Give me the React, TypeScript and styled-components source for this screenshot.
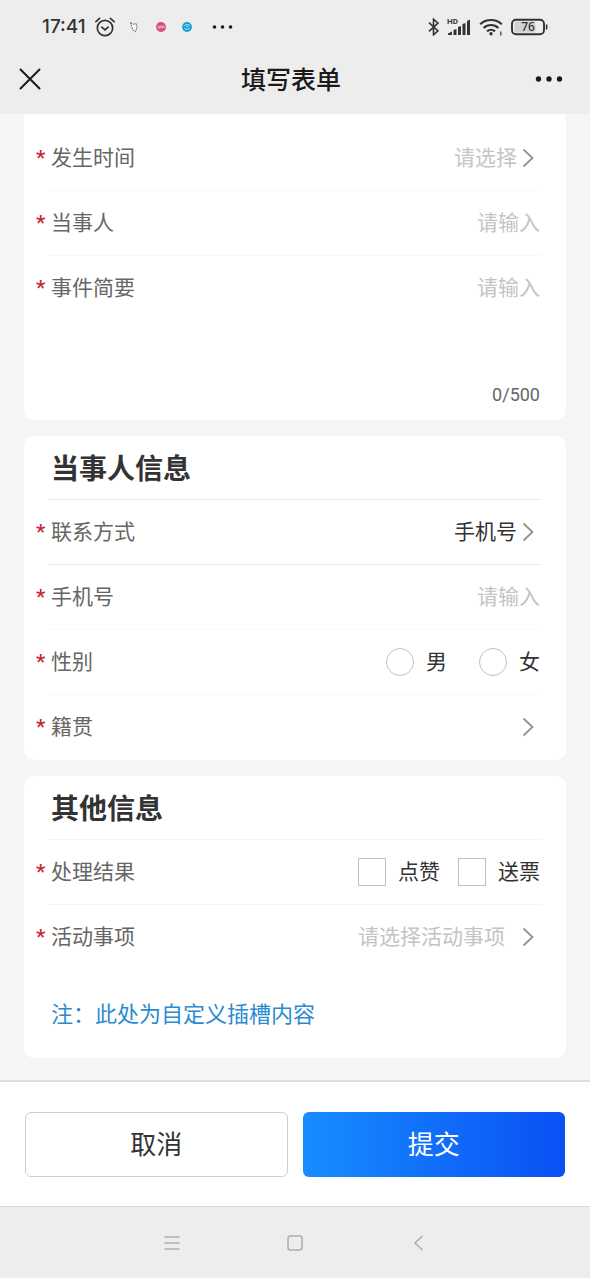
import React from "react";
import styled, { createGlobalStyle } from "styled-components";

const GlobalStyle = createGlobalStyle`
  *, *::before, *::after { box-sizing: border-box; }
  body {
    margin: 0;
    background: #f5f5f5;
    font-family: Roboto, "Noto Sans CJK SC", sans-serif;
    font-size: 21px;
    line-height: 30px;
    color: #333;
  }
  button, input, select, textarea {
    font: inherit;
    color: inherit;
    margin: 0;
    padding: 0;
    border: 0;
    background: none;
  }
`;

const Page = styled.div`
  min-height: 100vh;
  display: flex;
  flex-direction: column;
`;

const Header = styled.header`
  background: #ededed;
  padding-bottom: 9px;
`;

const StatusBar = styled.div`
  height: 53px;
  padding: 0 42px;
  display: flex;
  align-items: center;
  justify-content: space-between;
  color: #333;
`;

const StatusGroup = styled.div<{ $gap: number }>`
  display: flex;
  align-items: center;
  gap: ${(p) => p.$gap}px;
`;

const Clock = styled.time`
  font-family: Inter, sans-serif;
  font-size: 19px;
  font-weight: 500;
  line-height: 24px;
`;

const TitleBar = styled.div`
  height: 52px;
  padding: 0 27px 0 19px;
  display: grid;
  grid-template-columns: 1fr auto 1fr;
  align-items: center;
`;

const Title = styled.h1`
  margin: 0;
  padding-top: 4px;
  font-size: 25px;
  font-weight: 500;
  line-height: 36px;
  color: #1a1a1a;
`;

const IconButton = styled.button<{ $end?: boolean }>`
  display: flex;
  justify-self: ${(p) => (p.$end ? "end" : "start")};
  color: #1a1a1a;
`;

const Form = styled.form`
  flex: 1;
  display: flex;
  flex-direction: column;
`;

const Cards = styled.main`
  flex: 1;
  padding: 0 24px 22px;
  display: flex;
  flex-direction: column;
  gap: 16px;
`;

const Card = styled.section<{ $continued?: boolean }>`
  background: #fff;
  padding: ${(p) => (p.$continued ? "12px 24px 0" : "0 24px")};
  border-radius: ${(p) => (p.$continued ? "0 0 10px 10px" : "10px")};
`;

const CardTitle = styled.h2<{ $faint?: boolean }>`
  margin: 0;
  height: 64px;
  padding: 4px 3px 0;
  display: flex;
  align-items: center;
  font-size: 28px;
  font-weight: 700;
  line-height: 40px;
  border-bottom: 1px solid ${(p) => (p.$faint ? "#f4f4f4" : "#ececec")};
`;

const lineColors = {
  strong: "#ececec",
  medium: "#f4f4f4",
  faint: "#f9f9f9",
  none: "transparent",
};

const Row = styled.div<{ $line: keyof typeof lineColors }>`
  min-height: 65px;
  padding: 0 2px 0 3px;
  display: flex;
  align-items: center;
  border-bottom: 1px solid ${(p) => lineColors[p.$line]};
`;

const Required = styled.span`
  width: 15px;
  margin-left: -15px;
  font-weight: 500;
  color: #c4283c;
`;

const Label = styled.label`
  flex: none;
  color: #666;
`;

const TextInput = styled.input`
  flex: 1;
  min-width: 0;
  height: 30px;
  text-align: right;
  outline: none;
  &::placeholder { color: #c4c4c4; opacity: 1; }
`;

const Picker = styled.select<{ $empty?: boolean }>`
  flex: 1;
  min-width: 0;
  height: 30px;
  appearance: none;
  text-align-last: right;
  outline: none;
  color: ${(p) => (p.$empty ? "#c4c4c4" : "#333")};
`;

const PickerArrow = styled.svg<{ $wide?: boolean }>`
  flex: none;
  margin: 0 6px 0 ${(p) => (p.$wide ? 17 : 5)}px;
  pointer-events: none;
`;

const SummaryField = styled.div`
  height: 164px;
  padding: 17px 2px 10px 3px;
  display: flex;
  flex-direction: column;
  justify-content: space-between;
`;

const SummaryTop = styled.div`
  display: flex;
  align-items: flex-start;
`;

const SummaryInput = styled.textarea`
  flex: 1;
  min-width: 0;
  height: 90px;
  resize: none;
  outline: none;
  text-align: right;
  &::placeholder { color: #c4c4c4; opacity: 1; }
`;

const Counter = styled.output`
  align-self: flex-end;
  font-size: 18px;
  line-height: 30px;
  color: #666;
`;

const Options = styled.div<{ $gap: number }>`
  margin-left: auto;
  display: flex;
  gap: ${(p) => p.$gap}px;
`;

const Option = styled.label`
  display: flex;
  align-items: center;
  gap: 12px;
`;

const Tick = styled.input`
  appearance: none;
  width: 28px;
  height: 28px;
  border: 1px solid #c0c0c0;
  background: #fff;
  border-radius: ${(p) => (p.type === "radio" ? "50%" : "0")};
  &:checked { border: 8px solid #1989fa; }
`;

const Note = styled.p`
  margin: 0;
  padding: 30px 3px 28px;
  font-size: 22px;
  line-height: 30px;
  color: #2a8bd0;
`;

const Footer = styled.footer`
  display: grid;
  grid-template-columns: 1fr 1fr;
  gap: 15px;
  padding: 30px 25px 29px;
  background: #fff;
  border-top: 2px solid #dedede;
  border-bottom: 1px solid #d8d8d8;
`;

const ActionButton = styled.button<{ $primary?: boolean }>`
  height: 65px;
  border-radius: 6px;
  font-size: 26px;
  border: 1px solid ${(p) => (p.$primary ? "transparent" : "#cfcfcf")};
  color: ${(p) => (p.$primary ? "#fff" : "#333")};
  background: ${(p) =>
    p.$primary
      ? "linear-gradient(90deg, #178dff, #0a50f5) border-box"
      : "#fff"};
`;

const SystemNav = styled.nav`
  height: 71px;
  padding: 0 18.8%;
  display: grid;
  grid-template-columns: repeat(3, 1fr);
  background: #ededed;
  color: #adadad;
`;

const SystemButton = styled.button`
  display: flex;
  align-items: center;
  justify-content: center;
`;

const Arrow = ({ wide }: { wide?: boolean }) => (
  <PickerArrow $wide={wide} width="12" height="20" viewBox="0 0 12 20" fill="none" aria-hidden="true">
    <path d="M1.5 1.5 10.5 10l-9 8.5" stroke="#929292" strokeWidth="1.8" />
  </PickerArrow>
);

const StatusIconsLeft = () => (
  <StatusGroup $gap={14}>
    <StatusGroup $gap={9}>
      <Clock>17:41</Clock>
      <svg width="20" height="20" viewBox="0 0 20 20" fill="none" stroke="#333" strokeWidth="1.7" strokeLinecap="round">
        <circle cx="10" cy="11" r="7.7" />
        <path d="M.9 4.6 4.6 1.4M19.1 4.6l-3.7-3.2M6.8 10.2l3.2 2.6 3.2-2.6" />
      </svg>
    </StatusGroup>
    <svg width="12" height="12" viewBox="0 0 12 12" fill="#fff" stroke="#555" strokeWidth=".9" strokeDasharray="2 .7">
      <path d="M1.5 1.5 4 3.2l3.300-.4.8 3.600L7 8.500l-.6 2.300-2.200-1.400L2.800 6z" />
    </svg>
    <svg width="12" height="12" viewBox="0 0 12 12">
      <circle cx="6" cy="6" r="4.9" fill="#d94d72" />
      <path d="M2.5 5.2h1.8v2H2.6M5 7.5V5h1.6v1.4H5.2M7.5 7.4V5h1.8v1.4H7.7" fill="none" stroke="#f6bccb" strokeWidth=".8" />
    </svg>
    <svg width="12" height="12" viewBox="0 0 12 12">
      <circle cx="6" cy="6" r="4.9" fill="#149ed8" />
      <path d="M3 5.2C4 2.8 8 2.8 9 5.2M3.2 7.2c1.5 1.5 4.1 1.5 5.6 0M5 5.6h2.6" fill="none" stroke="#b5e6fa" strokeWidth="1" />
    </svg>
    <svg width="26" height="12" viewBox="0 0 26 12" fill="#1a1a1a">
      <circle cx="7.5" cy="6" r="1.8" />
      <circle cx="15.5" cy="6" r="1.8" />
      <circle cx="23.5" cy="6" r="1.8" />
    </svg>
  </StatusGroup>
);

const BatteryText = styled.text`
  font: 500 12px "Noto Sans", sans-serif;
`;

const NetworkText = styled.text`
  font: 700 8px Roboto, sans-serif;
`;

const StatusIconsRight = () => (
  <StatusGroup $gap={8}>
    <svg width="14" height="18" viewBox="0 0 14 18" fill="none" stroke="#333" strokeWidth="1.6">
      <path d="m4 4.700 9 8.200-4.500 3.900V1.200L13 5.100l-9 8.200" />
    </svg>
    <svg width="24" height="18" viewBox="0 0 24 18" fill="#333">
      <NetworkText x="0" y="6">HD</NetworkText>
      <path d="M1 17v-1.500l4-2V17zM6.500 17v-5l3-1v6zM11 17V9l3-1v9zM15.500 17V6l3-1v12zM20 17V3l3-1.500V17z" />
    </svg>
    <svg width="24" height="18" viewBox="0 0 24 18" fill="none" stroke="#333" strokeWidth="2.2">
      <path d="M1.200 6.200c6-5.600 15.600-5.600 21.600 0M4.600 10c4.200-4 10.600-4 14.800 0M8 13.300c2.300-2 5.700-2 8 0" />
      <circle cx="12" cy="15.800" r="1.700" fill="#333" stroke="none" />
      <path d="M21.800 13.500v4" strokeWidth="1.200" />
    </svg>
    <svg width="37" height="18" viewBox="0 0 37 18" fill="none">
      <rect x="3.500" y="3.500" width="21" height="11" rx="2" fill="#d2d2d2" />
      <rect x="1" y="1.800" width="32" height="14.400" rx="4" stroke="#333" strokeWidth="1.900" />
      <path d="M35.600 6.500v5" stroke="#333" strokeWidth="1.600" />
      <BatteryText x="17" y="13.300" textAnchor="middle" fill="#333">76</BatteryText>
    </svg>
  </StatusGroup>
);

export default function App() {
  return (
    <Page>
      <GlobalStyle />
      <Header>
        <StatusBar>
          <StatusIconsLeft />
          <StatusIconsRight />
        </StatusBar>
        <TitleBar>
          <IconButton type="button" aria-label="关闭">
            <svg width="22" height="22" viewBox="0 0 22 22" stroke="currentColor" strokeWidth="2" strokeLinecap="round">
              <path d="m1.500 1.500 19 19M20.500 1.500l-19 19" />
            </svg>
          </IconButton>
          <Title>填写表单</Title>
          <IconButton type="button" aria-label="更多" $end>
            <svg width="28" height="22" viewBox="0 0 28 22" fill="currentColor">
              <circle cx="3.500" cy="11" r="2.700" />
              <circle cx="14" cy="11" r="2.700" />
              <circle cx="24.500" cy="11" r="2.700" />
            </svg>
          </IconButton>
        </TitleBar>
      </Header>

      <Form onSubmit={(e) => e.preventDefault()}>
        <Cards>
          <Card $continued>
            <Row $line="faint">
              <Required>*</Required>
              <Label htmlFor="time">发生时间</Label>
              <Picker id="time" $empty>
                <option>请选择</option>
              </Picker>
              <Arrow />
            </Row>
            <Row $line="faint">
              <Required>*</Required>
              <Label htmlFor="person">当事人</Label>
              <TextInput id="person" placeholder="请输入" />
            </Row>
            <SummaryField>
              <SummaryTop>
                <Required>*</Required>
                <Label htmlFor="summary">事件简要</Label>
                <SummaryInput id="summary" placeholder="请输入" maxLength={500} />
              </SummaryTop>
              <Counter htmlFor="summary">0/500</Counter>
            </SummaryField>
          </Card>

          <Card>
            <CardTitle>当事人信息</CardTitle>
            <Row $line="strong">
              <Required>*</Required>
              <Label htmlFor="contact">联系方式</Label>
              <Picker id="contact">
                <option>手机号</option>
              </Picker>
              <Arrow />
            </Row>
            <Row $line="faint">
              <Required>*</Required>
              <Label htmlFor="phone">手机号</Label>
              <TextInput id="phone" type="tel" placeholder="请输入" />
            </Row>
            <Row $line="faint" role="radiogroup" aria-labelledby="gender">
              <Required>*</Required>
              <Label as="span" id="gender">性别</Label>
              <Options $gap={32}>
                <Option><Tick type="radio" name="gender" />男</Option>
                <Option><Tick type="radio" name="gender" />女</Option>
              </Options>
            </Row>
            <Row $line="none">
              <Required>*</Required>
              <Label htmlFor="origin">籍贯</Label>
              <Picker id="origin" $empty>
                <option value="" />
              </Picker>
              <Arrow />
            </Row>
          </Card>

          <Card>
            <CardTitle $faint>其他信息</CardTitle>
            <Row $line="medium" role="group" aria-labelledby="result">
              <Required>*</Required>
              <Label as="span" id="result">处理结果</Label>
              <Options $gap={18}>
                <Option><Tick type="checkbox" />点赞</Option>
                <Option><Tick type="checkbox" />送票</Option>
              </Options>
            </Row>
            <Row $line="none">
              <Required>*</Required>
              <Label htmlFor="activity">活动事项</Label>
              <Picker id="activity" $empty>
                <option>请选择活动事项</option>
              </Picker>
              <Arrow wide />
            </Row>
            <Note>注：此处为自定义插槽内容</Note>
          </Card>
        </Cards>

        <Footer>
          <ActionButton type="button">取消</ActionButton>
          <ActionButton type="submit" $primary>提交</ActionButton>
        </Footer>
      </Form>

      <SystemNav aria-label="系统导航">
        <SystemButton type="button" aria-label="菜单">
          <svg width="16" height="16" viewBox="0 0 16 16" stroke="currentColor" strokeWidth="1.3">
            <path d="M.5 2h15M.5 8h15M.5 14h15" />
          </svg>
        </SystemButton>
        <SystemButton type="button" aria-label="主页">
          <svg width="16" height="16" viewBox="0 0 16 16" fill="none" stroke="currentColor" strokeWidth="1.5">
            <rect x="1" y="1" width="14" height="14" rx="2.5" />
          </svg>
        </SystemButton>
        <SystemButton type="button" aria-label="返回">
          <svg width="16" height="16" viewBox="0 0 16 16" fill="none" stroke="currentColor" strokeWidth="1.5">
            <path d="M12.5 1 5 8l7.5 7" />
          </svg>
        </SystemButton>
      </SystemNav>
    </Page>
  );
}
